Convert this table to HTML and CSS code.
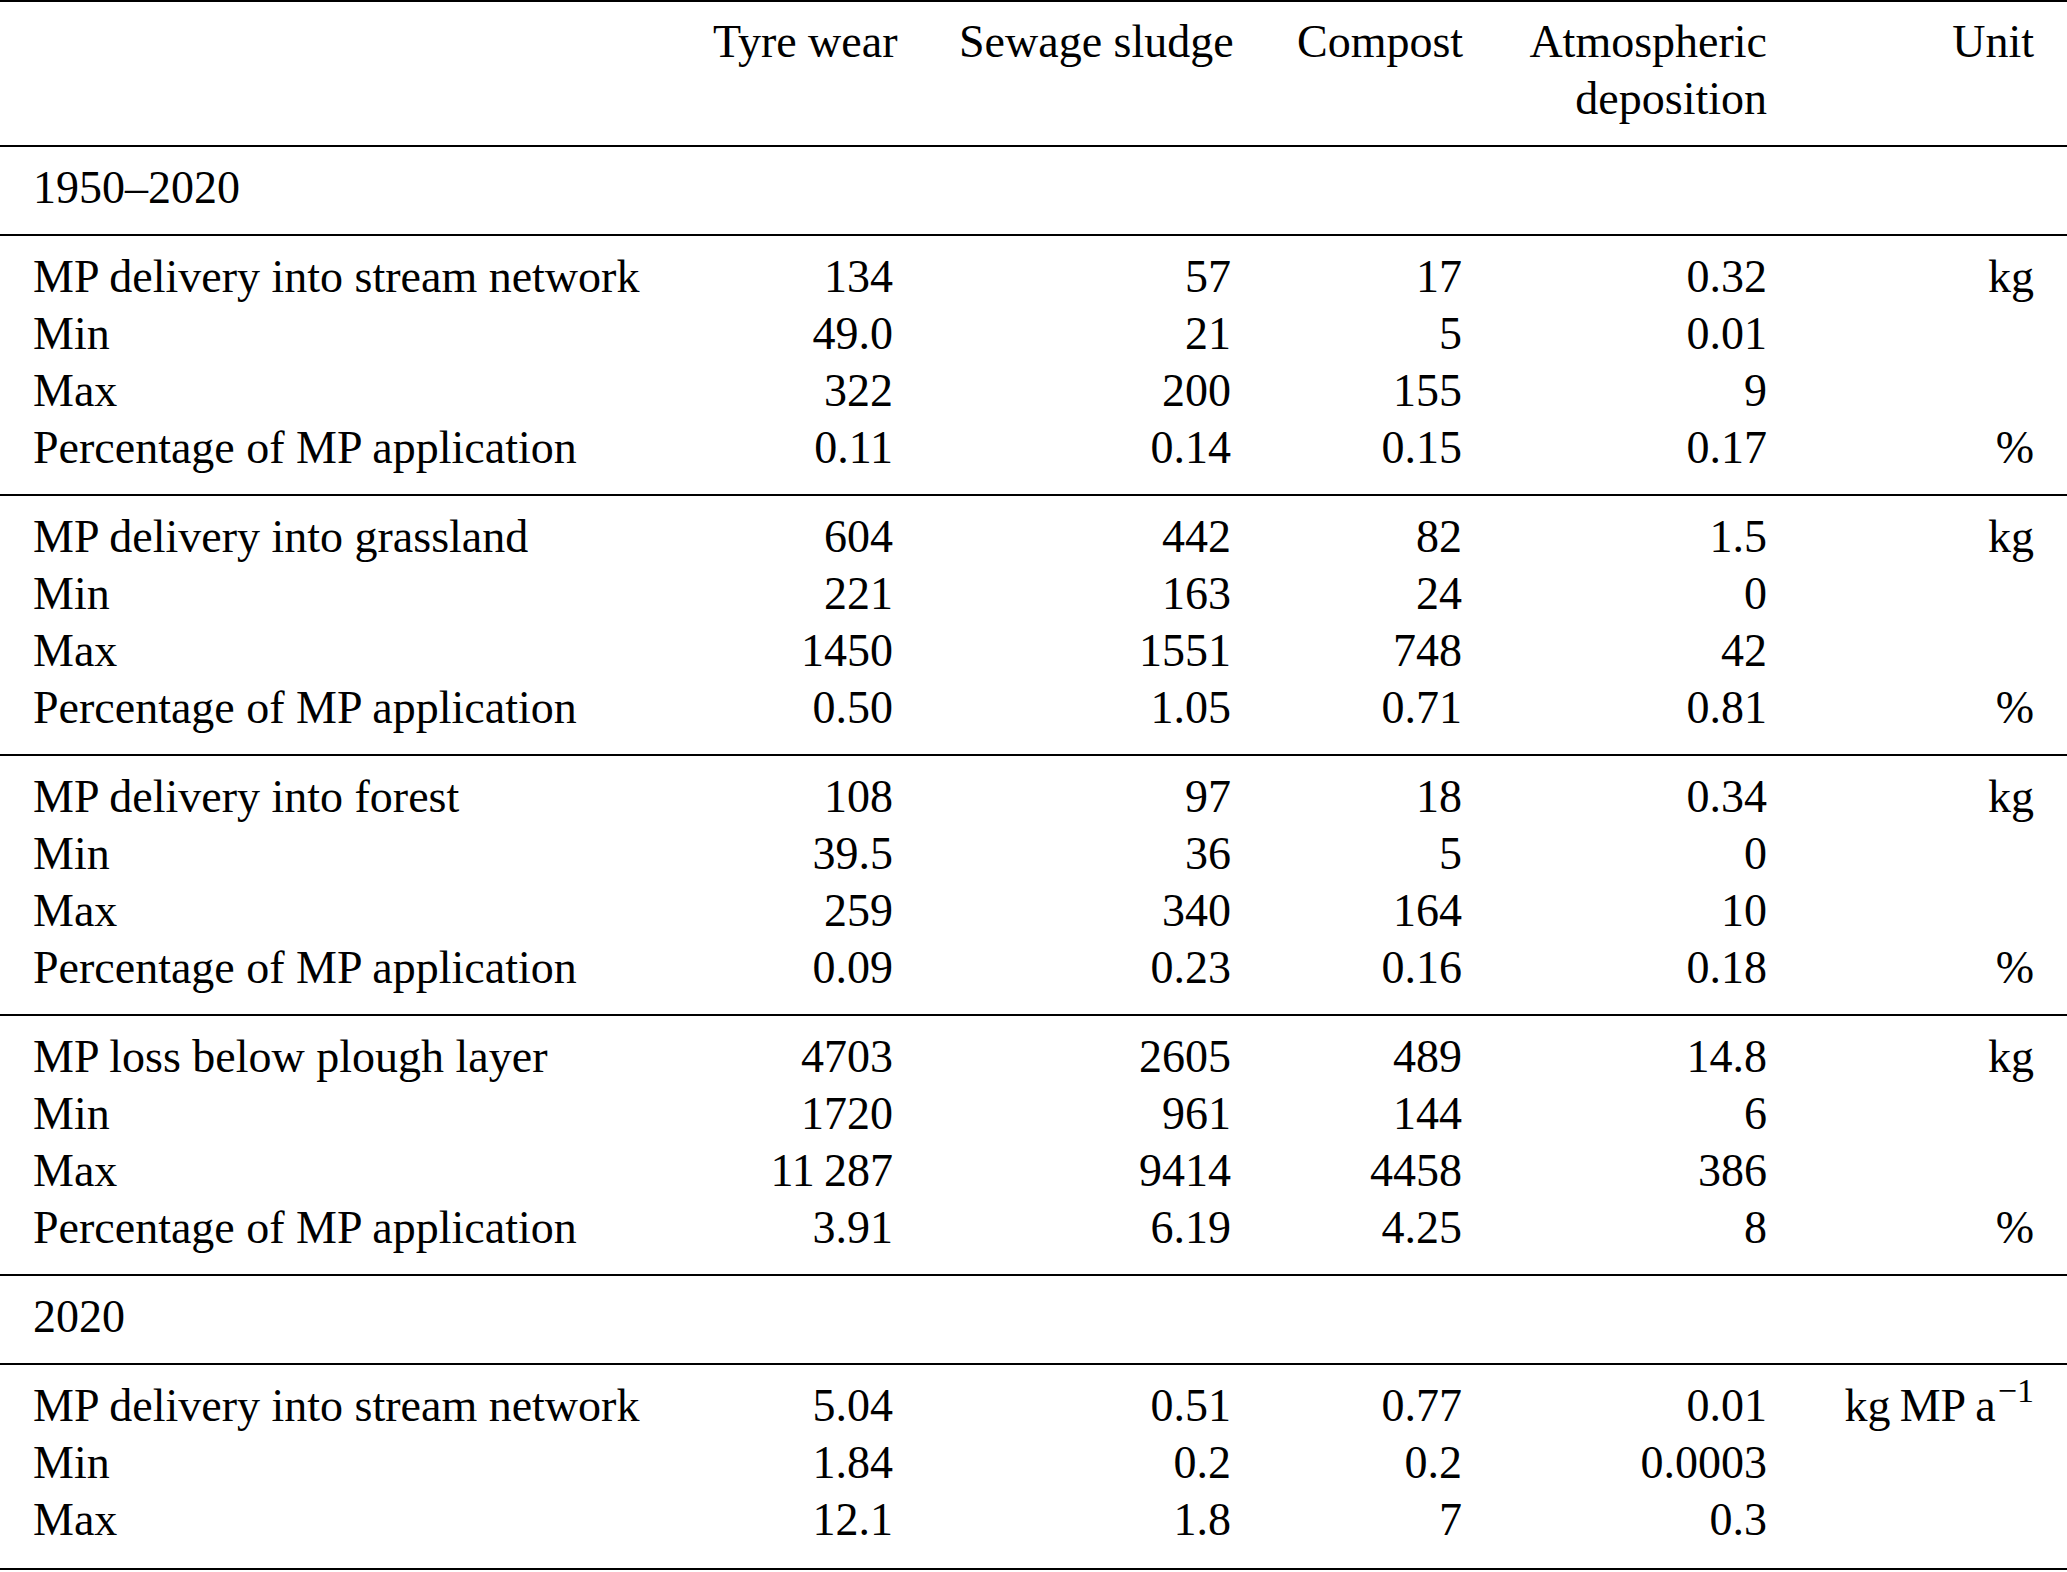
FILE: index.html
```html
<!DOCTYPE html>
<html lang="en">
<head>
<meta charset="utf-8">
<title>MP delivery table</title>
<link rel="stylesheet" href="styles.css">
</head>
<body>
<table class="data">
  <colgroup>
    <col class="c-label">
    <col class="c-tyre">
    <col class="c-sewage">
    <col class="c-compost">
    <col class="c-atmo">
    <col class="c-unit">
  </colgroup>
  <thead>
    <tr class="first last head">
      <th></th>
      <th class="num">Tyre wear</th>
      <th class="num">Sewage sludge</th>
      <th class="num">Compost</th>
      <th class="num">Atmospheric<br>deposition</th>
      <th class="num">Unit</th>
    </tr>
  </thead>
  <tbody>
    <tr class="first last"><td>1950–2020</td><td></td><td></td><td></td><td></td><td></td></tr>
  </tbody>
  <tbody>
    <tr class="first"><td>MP delivery into stream network</td><td class="num">134</td><td class="num">57</td><td class="num">17</td><td class="num">0.32</td><td class="num">kg</td></tr>
    <tr><td>Min</td><td class="num">49.0</td><td class="num">21</td><td class="num">5</td><td class="num">0.01</td><td class="num"></td></tr>
    <tr><td>Max</td><td class="num">322</td><td class="num">200</td><td class="num">155</td><td class="num">9</td><td class="num"></td></tr>
    <tr class="last"><td>Percentage of MP application</td><td class="num">0.11</td><td class="num">0.14</td><td class="num">0.15</td><td class="num">0.17</td><td class="num">%</td></tr>
  </tbody>
  <tbody>
    <tr class="first"><td>MP delivery into grassland</td><td class="num">604</td><td class="num">442</td><td class="num">82</td><td class="num">1.5</td><td class="num">kg</td></tr>
    <tr><td>Min</td><td class="num">221</td><td class="num">163</td><td class="num">24</td><td class="num">0</td><td class="num"></td></tr>
    <tr><td>Max</td><td class="num">1450</td><td class="num">1551</td><td class="num">748</td><td class="num">42</td><td class="num"></td></tr>
    <tr class="last"><td>Percentage of MP application</td><td class="num">0.50</td><td class="num">1.05</td><td class="num">0.71</td><td class="num">0.81</td><td class="num">%</td></tr>
  </tbody>
  <tbody>
    <tr class="first"><td>MP delivery into forest</td><td class="num">108</td><td class="num">97</td><td class="num">18</td><td class="num">0.34</td><td class="num">kg</td></tr>
    <tr><td>Min</td><td class="num">39.5</td><td class="num">36</td><td class="num">5</td><td class="num">0</td><td class="num"></td></tr>
    <tr><td>Max</td><td class="num">259</td><td class="num">340</td><td class="num">164</td><td class="num">10</td><td class="num"></td></tr>
    <tr class="last"><td>Percentage of MP application</td><td class="num">0.09</td><td class="num">0.23</td><td class="num">0.16</td><td class="num">0.18</td><td class="num">%</td></tr>
  </tbody>
  <tbody>
    <tr class="first"><td>MP loss below plough layer</td><td class="num">4703</td><td class="num">2605</td><td class="num">489</td><td class="num">14.8</td><td class="num">kg</td></tr>
    <tr><td>Min</td><td class="num">1720</td><td class="num">961</td><td class="num">144</td><td class="num">6</td><td class="num"></td></tr>
    <tr><td>Max</td><td class="num">11&thinsp;287</td><td class="num">9414</td><td class="num">4458</td><td class="num">386</td><td class="num"></td></tr>
    <tr class="last"><td>Percentage of MP application</td><td class="num">3.91</td><td class="num">6.19</td><td class="num">4.25</td><td class="num">8</td><td class="num">%</td></tr>
  </tbody>
  <tbody>
    <tr class="first last"><td>2020</td><td></td><td></td><td></td><td></td><td></td></tr>
  </tbody>
  <tbody class="final">
    <tr class="first"><td>MP delivery into stream network</td><td class="num">5.04</td><td class="num">0.51</td><td class="num">0.77</td><td class="num">0.01</td><td class="num unit">kg&thinsp;MP&thinsp;a<sup>−1</sup></td></tr>
    <tr><td>Min</td><td class="num">1.84</td><td class="num">0.2</td><td class="num">0.2</td><td class="num">0.0003</td><td class="num"></td></tr>
    <tr class="last"><td>Max</td><td class="num">12.1</td><td class="num">1.8</td><td class="num">7</td><td class="num">0.3</td><td class="num"></td></tr>
  </tbody>
</table>
</body>
</html>
```

FILE: styles.css
```css
html, body {
  margin: 0;
  padding: 0;
  background: #ffffff;
}

body {
  font-family: "Liberation Serif", "Times New Roman", serif;
  font-size: 46px;
  line-height: 57px;
  color: #000000;
}

.data {
  width: 2067px;
  table-layout: fixed;
  border-collapse: separate;
  border-spacing: 0;
}

.c-label { width: 680px; }
.c-tyre { width: 246px; }
.c-sewage { width: 338px; }
.c-compost { width: 231px; }
.c-atmo { width: 305px; }
.c-unit { width: 267px; }

.data th,
.data td {
  padding: 0 33px;
  font-weight: normal;
  text-align: left;
  vertical-align: top;
  white-space: nowrap;
  height: 57px;
  box-sizing: content-box;
}

.data .num {
  text-align: right;
}

.data tr.first > th,
.data tr.first > td {
  border-top: 2px solid #000000;
  padding-top: 12px;
}

.data tr.head > th {
  padding-top: 11px;
}

.data tr.last > th,
.data tr.last > td {
  padding-bottom: 18px;
}

.data tbody.final tr.last > td {
  border-bottom: 2px solid #000000;
  padding-bottom: 20px;
}

.unit {
  padding-right: 30px;
}

.unit sup {
  font-size: 0.74em;
  line-height: 0;
  vertical-align: 0.55em;
  margin-left: 2px;
}
```
